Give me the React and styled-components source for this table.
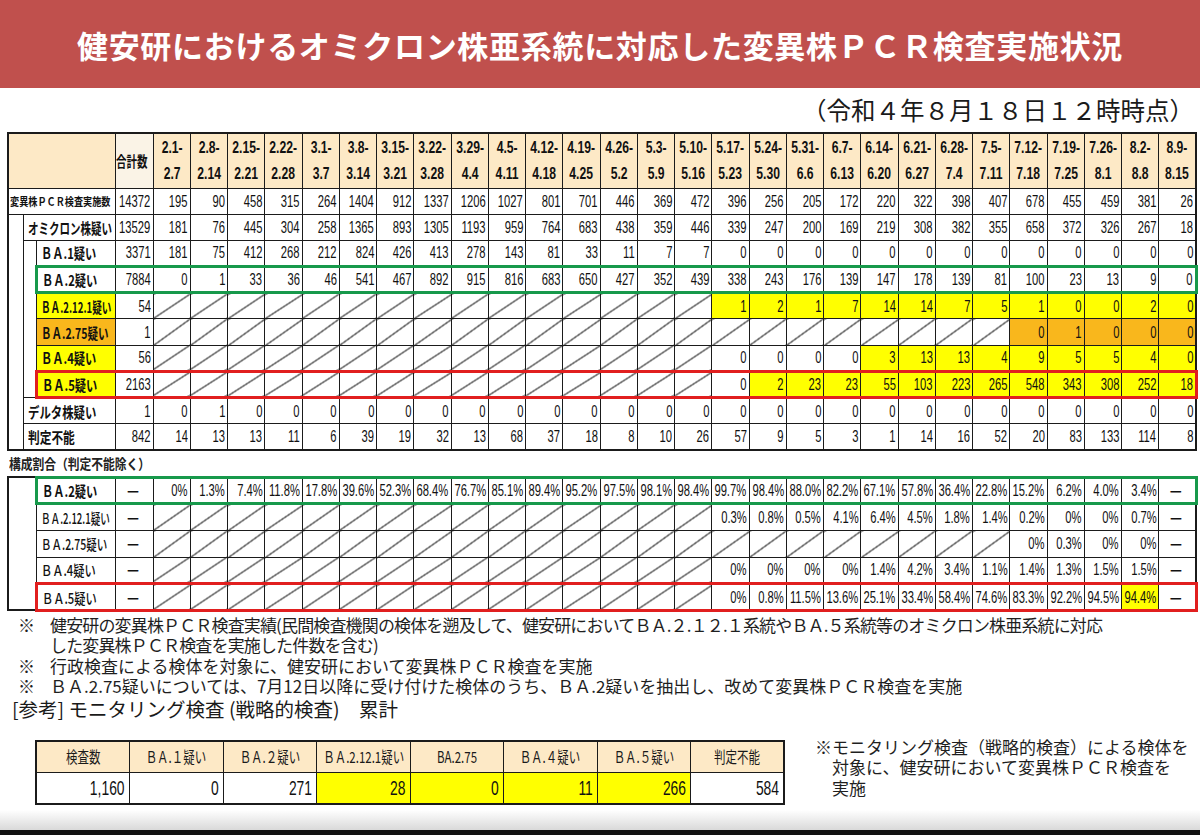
import React from "react";
import styled, { createGlobalStyle, css } from "styled-components";

const JP = `"Noto Sans CJK JP", "Noto Sans", sans-serif`;
const NUM = `"Liberation Sans", Arial, sans-serif`;

const C = {
  red: "#C0504D",
  peach: "#FDE9C6",
  peachLight: "#FAF3E6",
  yellow: "#FFFF00",
  orange: "#F9B71C",
  green: "#17994B",
  frameRed: "#E11F1F",
  line: "#1b1b1b",
};

const GlobalStyle = createGlobalStyle`
  html, body { margin: 0; padding: 0; background: #fff; }
  body { font-family: ${JP}; color: #1a1a1a; }
`;

const Page = styled.div`
  width: 1200px;
  height: 835px;
  display: flex;
  flex-direction: column;
  background: #fff;
  overflow: hidden;
`;

const TitleBar = styled.h1`
  margin: 0;
  height: 88px;
  flex: none;
  background: ${C.red};
  color: #fff;
  display: flex;
  align-items: center;
  justify-content: center;
  font: 700 31px/1 ${JP};
  letter-spacing: 0.7px;
`;

const DateLine = styled.div`
  height: 44px;
  flex: none;
  display: flex;
  align-items: center;
  justify-content: flex-end;
  padding-right: 6px;
  font: 400 24.5px/1 ${JP};
  color: #1a1a1a;
`;

const DataTable = styled.table`
  margin-left: 7px;
  width: 1188px;
  flex: none;
  table-layout: fixed;
  border-collapse: collapse;
  border: 2px solid ${C.line};
`;

const Col = styled.col`
  width: ${(p) => p.$w}px;
`;

const Squeeze = styled.span`
  display: inline-block;
  white-space: nowrap;
  transform: scaleX(${(p) => p.$sx});
  transform-origin: ${(p) => p.$origin || "left"} center;
`;

const Fit = styled.div`
  display: flex;
  justify-content: ${(p) => p.$j || "flex-end"};
  white-space: nowrap;
`;

const IndentCell = styled.td`
  border: 1px solid ${C.line};
  background: #fff;
  padding: 0;
`;

const LabelCell = styled.td`
  border: 1px solid ${C.line};
  background: ${(p) => p.$bg || "#fff"};
  padding: 0 0 0 ${(p) => (p.$pad == null ? 4 : p.$pad)}px;
  font: ${(p) => p.$weight || 700} ${(p) => p.$size || 15}px/1 ${JP};
  color: #111;
  white-space: nowrap;
`;

const NumCell = styled.td`
  border: 1px solid ${C.line};
  padding: 0 2px 0 0;
  background-color: ${(p) => p.$bg || "#fff"};
  font: 400 17px/1 ${NUM};
  color: #111;
  ${(p) =>
    p.$slash &&
    css`
      background-image: linear-gradient(
        to bottom right,
        transparent calc(50% - 0.8px),
        #2a2a2a calc(50% - 0.3px),
        #2a2a2a calc(50% + 0.3px),
        transparent calc(50% + 0.8px)
      );
    `}
`;

const DashText = styled.span`
  font: 700 15px/1 ${JP};
  color: #111;
`;

const HeadCell = styled.th`
  border: 1px solid ${C.line};
  padding: 0;
  background: ${(p) => p.$bg || C.peach};
  font: 700 16px/1 ${NUM};
  color: #111;
`;

const HeadStack = styled.div`
  display: flex;
  flex-direction: column;
  align-items: center;
  line-height: 26px;
  white-space: nowrap;
  transform: scaleX(0.76);
`;

const TotalHeadText = styled.span`
  display: inline-block;
  font: 700 15px/1 ${JP};
  white-space: nowrap;
  transform: scaleX(0.7);
  transform-origin: left center;
`;

const Row = styled.tr`
  height: ${(p) => p.$h}px;
  ${(p) =>
    p.$frame &&
    css`
      & > td:not(${IndentCell}) {
        border-top: 3px solid ${p.$frame};
        border-bottom: 3px solid ${p.$frame};
      }
      & > ${LabelCell} {
        border-left: 3px solid ${p.$frame};
      }
      & > td:last-child {
        border-right: 3px solid ${p.$frame};
      }
    `}
`;

const SectionLabel = styled.div`
  height: 25px;
  flex: none;
  display: flex;
  align-items: center;
  padding-left: 9px;
  font: 700 14px/1 ${JP};
  color: #222;
`;

const Notes = styled.div`
  margin-top: 3px;
  padding-left: 18px;
  font: 400 17px/20.5px ${JP};
  color: #1f1f1f;
  flex: none;
`;

const Note = styled.div`
  display: grid;
  grid-template-columns: 32px auto;
  white-space: nowrap;
`;

const NoteText = styled.span`
  letter-spacing: ${(p) => p.$ls || 0}px;
`;

const RefTitle = styled.div`
  padding-left: 12px;
  font: 400 19.5px/24px ${JP};
  color: #1a1a1a;
  white-space: nowrap;
  flex: none;
`;

const BottomArea = styled.div`
  margin-top: 19px;
  padding-left: 35px;
  display: flex;
  align-items: flex-start;
  gap: 30px;
  flex: none;
`;

const MiniTable = styled.table`
  width: 750px;
  table-layout: fixed;
  border-collapse: collapse;
  border: 2px solid ${C.line};
`;

const MiniHead = styled.th`
  height: 30px;
  padding: 0;
  border: 1px solid ${C.line};
  background: ${C.peach};
  font: 400 15.5px/1 ${JP};
  color: #1a1a1a;
`;

const MiniCell = styled.td`
  height: 30px;
  padding: 0 4px 0 0;
  border: 1px solid ${C.line};
  background: ${(p) => p.$bg || "#fff"};
  font: 400 21px/1 ${NUM};
  color: #111;
`;

const SideNote = styled.div`
  margin-top: -3px;
  padding-left: 17px;
  text-indent: -17px;
  font: 400 17px/20.5px ${JP};
  color: #1f1f1f;
  white-space: nowrap;
`;

const Footer = styled.div`
  margin-top: auto;
  height: 20px;
  flex: none;
  background: linear-gradient(#ffffff, #d9d9d9);
  border-bottom: 5px solid #111;
`;

/* ---------- data ---------- */

const weeks = [
  ["2.1-", "2.7"], ["2.8-", "2.14"], ["2.15-", "2.21"], ["2.22-", "2.28"],
  ["3.1-", "3.7"], ["3.8-", "3.14"], ["3.15-", "3.21"], ["3.22-", "3.28"],
  ["3.29-", "4.4"], ["4.5-", "4.11"], ["4.12-", "4.18"], ["4.19-", "4.25"],
  ["4.26-", "5.2"], ["5.3-", "5.9"], ["5.10-", "5.16"], ["5.17-", "5.23"],
  ["5.24-", "5.30"], ["5.31-", "6.6"], ["6.7-", "6.13"], ["6.14-", "6.20"],
  ["6.21-", "6.27"], ["6.28-", "7.4"], ["7.5-", "7.11"], ["7.12-", "7.18"],
  ["7.19-", "7.25"], ["7.26-", "8.1"], ["8.2-", "8.8"], ["8.9-", "8.15"],
];

const gap = (n) => Array(n).fill(null);
const zeros = (n) => Array(n).fill(0);

const mainRows = [
  {
    key: "pcr", level: 0, label: "変異株ＰＣＲ検査実施数", size: 11, sx: 0.83, total: 14372,
    vals: [195, 90, 458, 315, 264, 1404, 912, 1337, 1206, 1027, 801, 701, 446, 369, 472, 396, 256, 205, 172, 220, 322, 398, 407, 678, 455, 459, 381, 26],
  },
  {
    key: "omi", level: 1, label: "オミクロン株疑い", sx: 0.7, total: 13529,
    vals: [181, 76, 445, 304, 258, 1365, 893, 1305, 1193, 959, 764, 683, 438, 359, 446, 339, 247, 200, 169, 219, 308, 382, 355, 658, 372, 326, 267, 18],
  },
  {
    key: "ba1", level: 2, label: "ＢＡ.1疑い", sx: 0.75, total: 3371,
    vals: [181, 75, 412, 268, 212, 824, 426, 413, 278, 143, 81, 33, 11, 7, 7].concat(zeros(13)),
  },
  {
    key: "ba2", level: 2, label: "ＢＡ.2疑い", sx: 0.75, total: 7884, frame: C.green,
    vals: [0, 1, 33, 36, 46, 541, 467, 892, 915, 816, 683, 650, 427, 352, 439, 338, 243, 176, 139, 147, 178, 139, 81, 100, 23, 13, 9, 0],
  },
  {
    key: "ba2121", level: 2, label: "ＢＡ.2.12.1疑い", sx: 0.64, total: 54, labelBg: C.yellow, hl: C.yellow, hlFrom: 15,
    vals: gap(15).concat([1, 2, 1, 7, 14, 14, 7, 5, 1, 0, 0, 2, 0]),
  },
  {
    key: "ba275", level: 2, label: "ＢＡ.2.75疑い", sx: 0.7, total: 1, labelBg: C.orange, hl: C.orange, hlFrom: 23,
    vals: gap(23).concat([0, 1, 0, 0, 0]),
  },
  {
    key: "ba4", level: 2, label: "ＢＡ.4疑い", sx: 0.75, total: 56, labelBg: C.yellow, hl: C.yellow, hlFrom: 19,
    vals: gap(15).concat([0, 0, 0, 0, 3, 13, 13, 4, 9, 5, 5, 4, 0]),
  },
  {
    key: "ba5", level: 2, label: "ＢＡ.5疑い", sx: 0.75, total: 2163, labelBg: C.yellow, hl: C.yellow, hlFrom: 16, frame: C.frameRed,
    vals: gap(15).concat([0, 2, 23, 23, 55, 103, 223, 265, 548, 343, 308, 252, 18]),
  },
  {
    key: "delta", level: 1, label: "デルタ株疑い", sx: 0.76, total: 1,
    vals: [0, 1].concat(zeros(26)),
  },
  {
    key: "hantei", level: 1, label: "判定不能", sx: 0.78, total: 842,
    vals: [14, 13, 13, 11, 6, 39, 19, 32, 13, 68, 37, 18, 8, 10, 26, 57, 9, 5, 3, 1, 14, 16, 52, 20, 83, 133, 114, 8],
  },
];

const D = "－";
const pctRows = [
  {
    key: "p2", label: "ＢＡ.2疑い", sx: 0.75, weight: 700, frame: C.green,
    vals: ["0%", "1.3%", "7.4%", "11.8%", "17.8%", "39.6%", "52.3%", "68.4%", "76.7%", "85.1%", "89.4%", "95.2%", "97.5%", "98.1%", "98.4%", "99.7%", "98.4%", "88.0%", "82.2%", "67.1%", "57.8%", "36.4%", "22.8%", "15.2%", "6.2%", "4.0%", "3.4%", D],
  },
  {
    key: "p2121", label: "ＢＡ.2.12.1疑い", sx: 0.64, weight: 500,
    vals: gap(15).concat(["0.3%", "0.8%", "0.5%", "4.1%", "6.4%", "4.5%", "1.8%", "1.4%", "0.2%", "0%", "0%", "0.7%", D]),
  },
  {
    key: "p275", label: "ＢＡ.2.75疑い", sx: 0.7, weight: 500,
    vals: gap(23).concat(["0%", "0.3%", "0%", "0%", D]),
  },
  {
    key: "p4", label: "ＢＡ.4疑い", sx: 0.75, weight: 500,
    vals: gap(15).concat(["0%", "0%", "0%", "0%", "1.4%", "4.2%", "3.4%", "1.1%", "1.4%", "1.3%", "1.5%", "1.5%", D]),
  },
  {
    key: "p5", label: "ＢＡ.5疑い", sx: 0.75, weight: 500, frame: C.frameRed, hlAt: 26,
    vals: gap(15).concat(["0%", "0.8%", "11.5%", "13.6%", "25.1%", "33.4%", "58.4%", "74.6%", "83.3%", "92.2%", "94.5%", "94.4%", D]),
  },
];

const miniHeads = ["検査数", "ＢＡ.１疑い", "ＢＡ.２疑い", "ＢＡ.2.12.1疑い", "BA.2.75", "ＢＡ.４疑い", "ＢＡ.５疑い", "判定不能"];
const miniVals = [
  { v: "1,160" }, { v: "0" }, { v: "271" },
  { v: "28", bg: C.yellow }, { v: "0", bg: C.yellow }, { v: "11", bg: C.yellow }, { v: "266", bg: C.yellow },
  { v: "584" },
];

/* ---------- pieces ---------- */

const Num = ({ children, sx = 0.66 }) => (
  <Fit $j="flex-end">
    <Squeeze $sx={sx} $origin="right">{children}</Squeeze>
  </Fit>
);

const Dash = () => (
  <Fit $j="center">
    <DashText>{D}</DashText>
  </Fit>
);

const ColSet = () => (
  <colgroup>
    <Col $w={15} />
    <Col $w={13} />
    <Col $w={79} />
    <Col $w={38} />
    {weeks.map((w) => (
      <Col key={w[0]} $w={37.25} />
    ))}
  </colgroup>
);

const MainTable = () => (
  <DataTable>
    <ColSet />
    <tbody>
      <Row $h={55}>
        <HeadCell colSpan={3} />
        <HeadCell $bg={C.peachLight}>
          <Fit $j="flex-start">
            <TotalHeadText>合計数</TotalHeadText>
          </Fit>
        </HeadCell>
        {weeks.map(([a, b]) => (
          <HeadCell key={a}>
            <HeadStack>
              <span>{a}</span>
              <span>{b}</span>
            </HeadStack>
          </HeadCell>
        ))}
      </Row>
      {mainRows.map((r, i) => (
        <Row key={r.key} $h={26.2} $frame={r.frame}>
          {i === 1 && <IndentCell rowSpan={9} />}
          {i === 2 && <IndentCell rowSpan={6} />}
          <LabelCell
            colSpan={3 - r.level}
            $bg={r.labelBg}
            $size={r.size}
            $pad={r.level === 0 ? 1 : 4}
          >
            <Squeeze $sx={r.sx}>{r.label}</Squeeze>
          </LabelCell>
          <NumCell>
            <Num>{r.total}</Num>
          </NumCell>
          {r.vals.map((v, j) =>
            v === null ? (
              <NumCell key={j} $slash />
            ) : (
              <NumCell key={j} $bg={r.hl && j >= r.hlFrom ? r.hl : undefined}>
                <Num>{v}</Num>
              </NumCell>
            )
          )}
        </Row>
      ))}
    </tbody>
  </DataTable>
);

const PctTable = () => (
  <DataTable>
    <ColSet />
    <tbody>
      {pctRows.map((r, i) => (
        <Row key={r.key} $h={26.6} $frame={r.frame}>
          {i === 0 && <IndentCell colSpan={2} rowSpan={5} />}
          <LabelCell $weight={r.weight}>
            <Squeeze $sx={r.sx}>{r.label}</Squeeze>
          </LabelCell>
          <NumCell>
            <Dash />
          </NumCell>
          {r.vals.map((v, j) =>
            v === null ? (
              <NumCell key={j} $slash />
            ) : v === D ? (
              <NumCell key={j}>
                <Dash />
              </NumCell>
            ) : (
              <NumCell key={j} $bg={r.hlAt === j ? C.yellow : undefined}>
                <Num>{v}</Num>
              </NumCell>
            )
          )}
        </Row>
      ))}
    </tbody>
  </DataTable>
);

const MonitoringTable = () => (
  <MiniTable>
    <tbody>
      <tr>
        {miniHeads.map((h) => (
          <MiniHead key={h}>
            <Fit $j="center">
              <Squeeze $sx={0.74} $origin="center">{h}</Squeeze>
            </Fit>
          </MiniHead>
        ))}
      </tr>
      <tr>
        {miniVals.map((c, i) => (
          <MiniCell key={i} $bg={c.bg}>
            <Num sx={0.66}>{c.v}</Num>
          </MiniCell>
        ))}
      </tr>
    </tbody>
  </MiniTable>
);

export default function App() {
  return (
    <>
      <GlobalStyle />
      <Page>
        <TitleBar>健安研におけるオミクロン株亜系統に対応した変異株ＰＣＲ検査実施状況</TitleBar>
        <DateLine>（令和４年８月１８日１２時時点）</DateLine>
        <MainTable />
        <SectionLabel>
          <Squeeze $sx={0.84}>構成割合（判定不能除く）</Squeeze>
        </SectionLabel>
        <PctTable />
        <Notes>
          <Note>
            <span>※</span>
            <NoteText $ls={-0.85}>
              健安研の変異株ＰＣＲ検査実績(民間検査機関の検体を遡及して、健安研においてＢＡ.２.１２.１系統やＢＡ.５系統等のオミクロン株亜系統に対応
              <br />
              した変異株ＰＣＲ検査を実施した件数を含む)
            </NoteText>
          </Note>
          <Note>
            <span>※</span>
            <NoteText>行政検査による検体を対象に、健安研において変異株ＰＣＲ検査を実施</NoteText>
          </Note>
          <Note>
            <span>※</span>
            <NoteText>
              ＢＡ.2.75疑いについては、7月12日以降に受け付けた検体のうち、ＢＡ.2疑いを抽出し、改めて変異株ＰＣＲ検査を実施
            </NoteText>
          </Note>
        </Notes>
        <RefTitle>[参考] モニタリング検査 (戦略的検査)　累計</RefTitle>
        <BottomArea>
          <MonitoringTable />
          <SideNote>
            ※モニタリング検査（戦略的検査）による検体を
            <br />
            対象に、健安研において変異株ＰＣＲ検査を
            <br />
            実施
          </SideNote>
        </BottomArea>
        <Footer />
      </Page>
    </>
  );
}
